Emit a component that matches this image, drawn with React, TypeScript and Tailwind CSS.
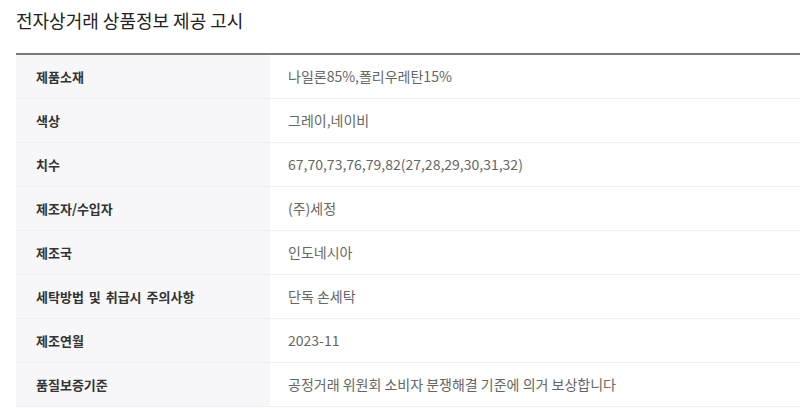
import React from 'react';

const rows: [string, string][] = [
    ['제품소재', '나일론85%,폴리우레탄15%'],
    ['색상', '그레이,네이비'],
    ['치수', '67,70,73,76,79,82(27,28,29,30,31,32)'],
    ['제조자/수입자', '(주)세정'],
    ['제조국', '인도네시아'],
    ['세탁방법 및 취급시 주의사항', '단독 손세탁'],
    ['제조연월', '2023-11'],
    ['품질보증기준', '공정거래 위원회 소비자 분쟁해결 기준에 의거 보상합니다'],
];

export default function App() {
    return (
        <main
            className="min-h-screen bg-white pl-4"
            style={{ fontFamily: '"Noto Sans CJK KR", "Noto Sans", sans-serif' }}
        >
            {/* Title */}
            <h2 className="pt-[7px] h-[53px] text-[18px] leading-[26px] text-[#222]">
                전자상거래 상품정보 제공 고시
            </h2>

            {/* Table */}
            <div className="border-t-2 border-[#7a7a7a]">
                {rows.map(([label, value]) => (
                    <div key={label} className="flex h-[44px] border-b border-[#efefef]">
                        <div className="w-[254px] shrink-0 bg-[#f7f7f9] pl-5 flex items-center text-[13px] font-bold text-[#333] [word-spacing:2px]">
                            {label}
                        </div>
                        <div className="flex-1 pl-[18px] flex items-center text-[14px] text-[#666]">
                            {value}
                        </div>
                    </div>
                ))}
            </div>
        </main>
    );
}
